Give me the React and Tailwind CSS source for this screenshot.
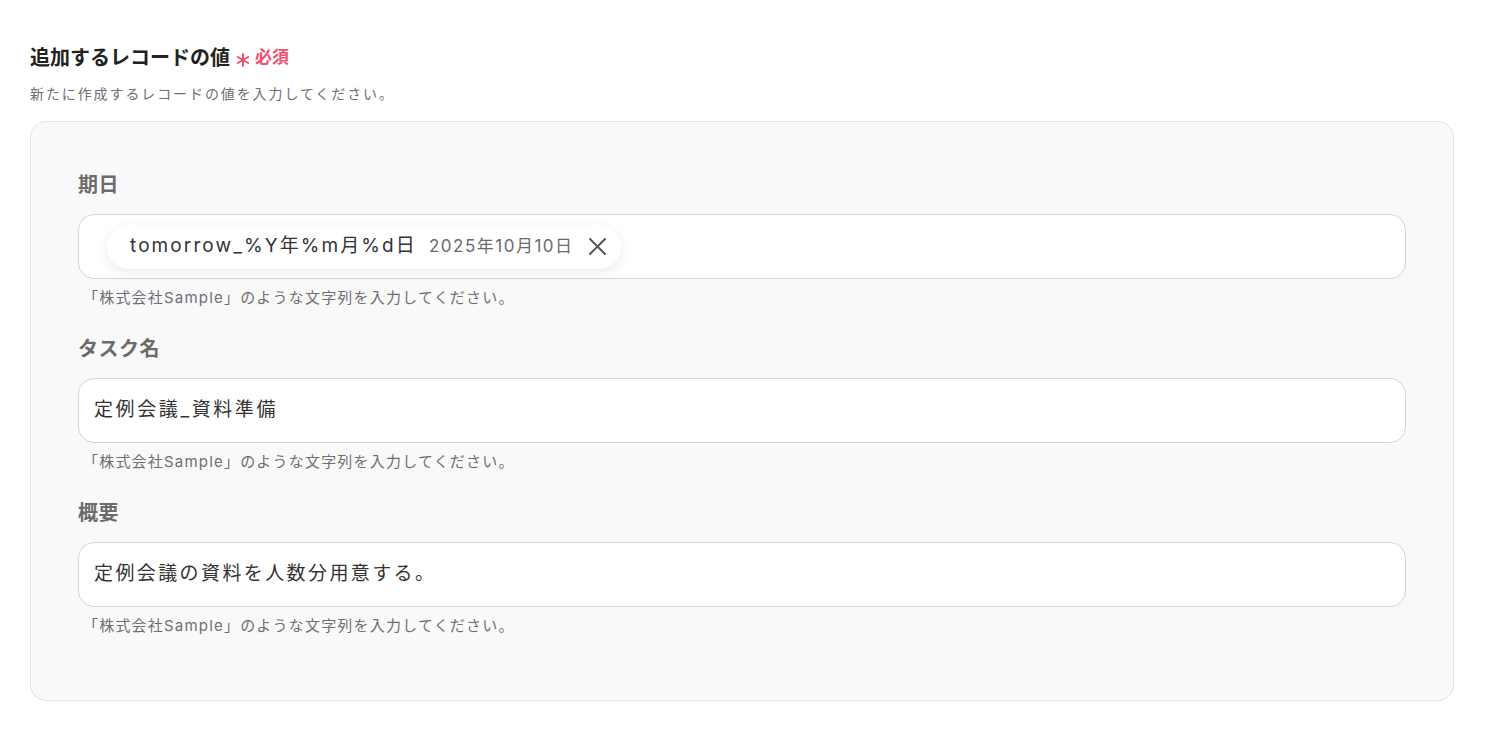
const font = { fontFamily: '"Inter", "Noto Sans CJK JP", sans-serif' };

const HINT = "「株式会社Sample」のような文字列を入力してください。";

const Field = ({ label, children, last }) => (
  <div className={last ? "" : "mb-[28px]"}>
    <div className="text-[20px] leading-[27px] font-semibold text-[#6b6b6b] tracking-[0.5px] mb-[15px]">{label}</div>
    <div className="h-[65px] bg-white border border-[#d3d6df] rounded-[16px] flex items-center">
      {children}
    </div>
    <p className="mt-[9px] pl-[5px] text-[15px] leading-[20px] tracking-[1.2px] text-[#6b6f76]">{HINT}</p>
  </div>
);

const Asterisk = () => (
  <svg width="14" height="14" viewBox="0 0 14 14" className="mt-[4px]" stroke="#f0506e" strokeWidth="2" strokeLinecap="round">
    <line x1="7" y1="1" x2="7" y2="13" />
    <line x1="1.8" y1="4" x2="12.2" y2="10" />
    <line x1="1.8" y1="10" x2="12.2" y2="4" />
  </svg>
);

export default function App() {
  return (
    <div style={font} className="min-h-screen bg-white px-[30px] pt-[43px]">
      <div className="flex items-center">
        <h2 className="text-[20px] leading-[30px] font-bold text-[#222]">追加するレコードの値</h2>
        <span className="ml-[6px]"><Asterisk /></span>
        <span className="ml-[5px] text-[#f0506e] text-[17px] font-bold">必須</span>
      </div>
      <p className="mt-[11px] text-[14px] leading-[20px] tracking-[1.9px] text-[#6b6f76]">新たに作成するレコードの値を入力してください。</p>

      <div className="mt-[17px] w-[1424px] bg-[#f9f9fa] border border-[#e2e3e6] rounded-[16px] px-[47px] pt-[50px] pb-[64px]">
        <Field label="期日">
          <div className="ml-[28px] h-[44px] bg-white rounded-full shadow-[0_4px_14px_rgba(0,0,0,0.08)] flex items-center pl-[23px] pr-[15px]">
            <span className="text-[19px] text-[#333] tracking-[2.1px]">tomorrow_%Y年%m月%d日</span>
            <span className="ml-[12px] text-[17px] text-[#6b6b6b] tracking-[1.5px]">2025年10月10日</span>
            <svg width="17" height="17" viewBox="0 0 17 17" className="ml-[15px]" stroke="#555" strokeWidth="2" strokeLinecap="round">
              <line x1="1" y1="1" x2="16" y2="16" />
              <line x1="16" y1="1" x2="1" y2="16" />
            </svg>
          </div>
        </Field>
        <Field label="タスク名">
          <span className="pl-[15px] text-[19px] text-[#333] tracking-[2.6px]">定例会議_資料準備</span>
        </Field>
        <Field label="概要" last>
          <span className="pl-[15px] text-[19px] text-[#333] tracking-[2.4px]">定例会議の資料を人数分用意する。</span>
        </Field>
      </div>
    </div>
  );
}
